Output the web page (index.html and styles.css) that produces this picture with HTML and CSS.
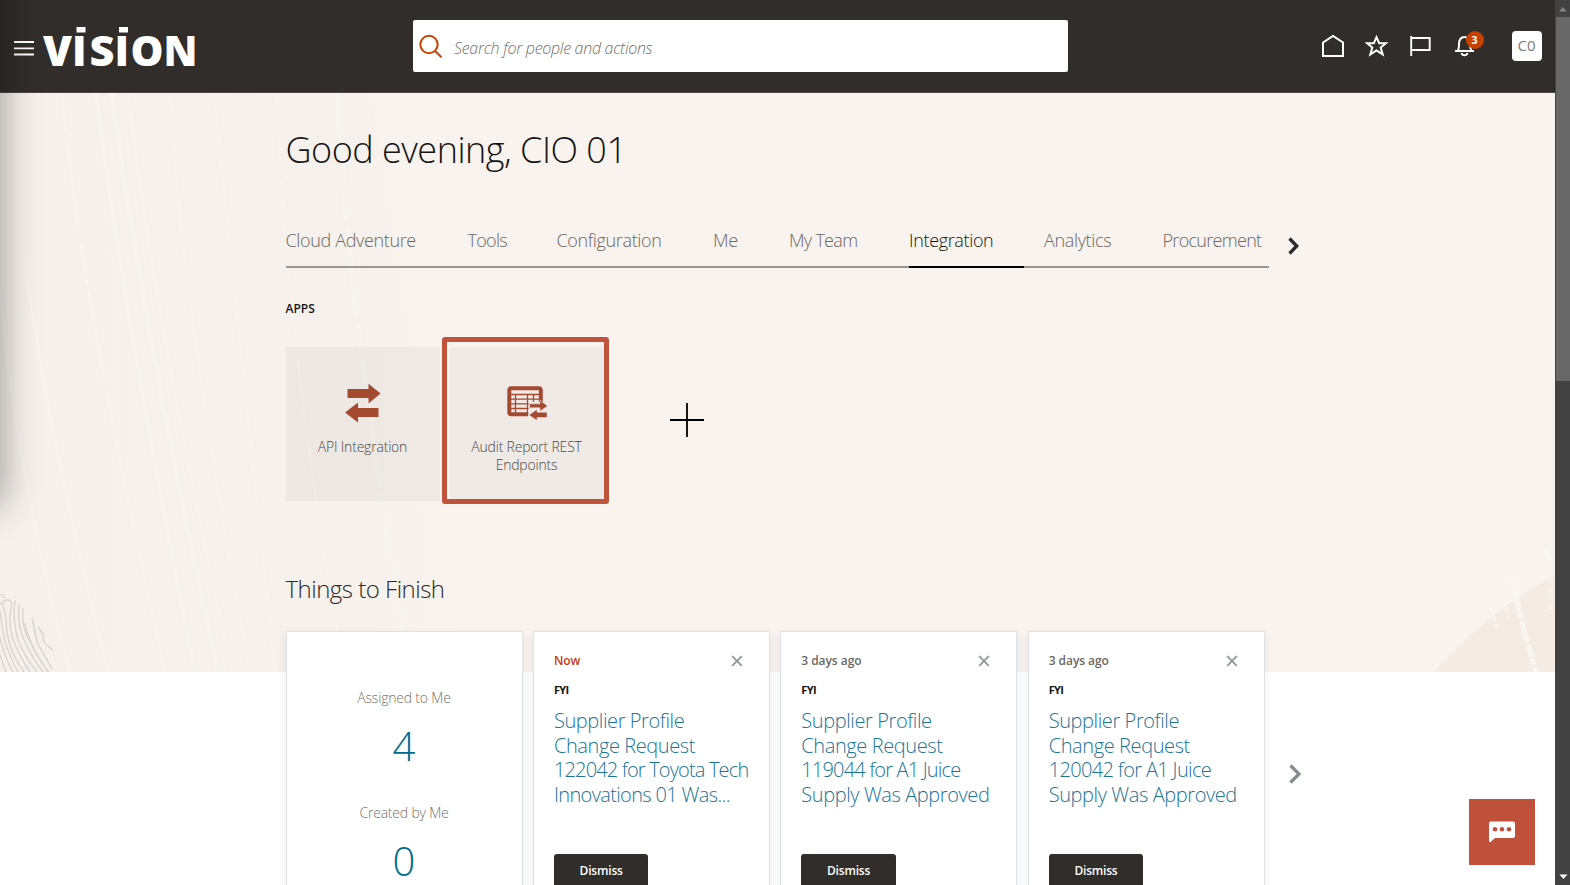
FILE: index.html
```html
<!DOCTYPE html>
<html lang="en">
<head>
<meta charset="utf-8">
<title>Vision</title>
<link rel="stylesheet" href="styles.css">
</head>
<body>
<div class="window">
  <div class="page">
    <header class="header">
      <svg class="menu-icon" width="20" height="16" viewBox="0 0 20 16"><path d="M0 2h20M0 8.3h20M0 14.5h20" stroke="#fff" stroke-width="1.8"/></svg>
      <svg class="logo" width="154" height="60" viewBox="0 -10 154 60">
        <g class="logo-text">
          <text x="0" y="40" textLength="29" lengthAdjust="spacingAndGlyphs">V</text>
          <text x="29" y="40">I</text>
          <text x="46.500" y="40" textLength="25" lengthAdjust="spacingAndGlyphs">S</text>
          <text x="71.500" y="40">I</text>
          <text x="87.500" y="40" textLength="33" lengthAdjust="spacingAndGlyphs">O</text>
          <text x="120.500" y="40" textLength="34" lengthAdjust="spacingAndGlyphs">N</text>
        </g>
        <path d="M33.500 1h9v5.500h-9zM76 1h9v5.500h-9zM32 10h4v4zM74.500 10h4v4z" fill="#fff"/>
      </svg>
      <div class="search">
        <svg width="26" height="26" viewBox="0 0 26 26" fill="none" stroke="#c74200" stroke-width="2"><circle cx="11" cy="10.500" r="8.700"/><path d="M17 17l6.500 6.300"/></svg>
        <span class="search-text">Search for people and actions</span>
      </div>
      <div class="actions">
        <svg width="24" height="24" viewBox="0 0 24 24" fill="none" stroke="#fff" stroke-width="2"><path d="M2 8.500L12 2l10 6.500V22H2z"/></svg>
        <svg width="24" height="24" viewBox="0 0 24 24" fill="none" stroke="#fff" stroke-width="2"><path d="M11.500 3.200l2.700 6h6.700l-5.200 4.300 2 6.900-6.200-4-6.200 4 2-6.900L2.100 9.200h6.700z"/></svg>
        <svg width="24" height="24" viewBox="0 0 24 24" fill="none" stroke="#fff" stroke-width="1.900"><path d="M2.200 2v20M2.200 4h18.500v12H2.200"/></svg>
        <div class="bell">
          <svg width="24" height="24" viewBox="0 0 24 24" fill="none" stroke="#fff" stroke-width="2"><path d="M2 17h19M5 16.500c1-2 1-3.500 1-6 0-4.500 2-7.500 5.500-7.500s5.500 3 5.500 7.500c0 2.500.2 4 1.500 6"/><path d="M8.500 19c.8 3 5.200 3 6 0"/></svg>
          <span class="badge">3</span>
        </div>
        <span class="avatar">C0</span>
      </div>
    </header>

    <main class="main">
      <svg class="texture" width="1555" height="579" viewBox="0 0 1555 579" fill="none">
        <defs>
          <linearGradient id="tint" x1="0" x2="1"><stop offset="0" stop-color="#f5f0ec"/><stop offset=".75" stop-color="#f6f1ed"/><stop offset="1" stop-color="#f8f3ef"/></linearGradient>
        </defs>
        <path d="M0 0H370Q410 250 475 579H0z" fill="url(#tint)"/>
        <g stroke="#f8f4f0" stroke-width="2.500" opacity=".75">
          <path d="M96 0Q125 230 195 579" stroke-width="4"/><path d="M112 0Q140 220 218 579" stroke-width="5"/><path d="M128 0Q155 230 232 579"/>
          <path d="M62 0Q80 200 165 579" stroke-dasharray="40 8 90 14"/><path d="M28 190Q50 350 108 579"/><path d="M215 10Q230 160 275 579" stroke-dasharray="150 30 80 9"/>
          <path d="M277 0Q285 250 345 579" stroke-dasharray="70 18"/><path d="M338 0Q345 200 410 579" stroke-width="6" stroke-dasharray="90 8 30 6"/>
          <path d="M170 0Q180 200 250 579" stroke-dasharray="20 30 90 12" stroke-width="2"/><path d="M0 200Q20 400 70 579" stroke-width="2"/>
        </g>
        <path d="M1434 579Q1492 515 1555 482V579z" fill="#f4ebe4"/>
        <g stroke="#f9f5f1">
          <path d="M1512 481Q1518 520 1536 579" stroke-width="5" stroke-dasharray="14 1 7 2"/><path d="M1510 482l4 22" stroke-width="7" stroke-dasharray="3 2"/>
          <path d="M1490 514l8 22M1506 514l3 10" stroke-width="3" stroke-dasharray="5 4"/><path d="M1550 430v90" stroke-width="5" stroke-dasharray="7 2 3 4" opacity=".6"/><path d="M1541 452l9 12" stroke-width="4"/>
        </g>
        <g stroke="#d9d4cf" stroke-width="1.400">
          <path d="M1 501l4 4M3 511q1-5 6-4q4 2 2 8c-2 12-1 24 3 34q7 17 16 30"/>
          <path d="M0 509q5 6 6 16c0 20 5 36 18 54M0 518q3 24 6 34 5 14 12 27M0 545q4 18 13 34M0 562l6 17"/>
          <path d="M15 507q-3 26 5 45 7 15 17 27M19 511q-2 22 6 38 8 17 18 30M23 515q-2 18 7 34 8 17 19 30M32 525l5 24 15 27M38 534l5 7M44 541q-4 8 9 16M25 530q2 14 13 33l10 16"/>
        </g>
      </svg>
      <div class="edge-shadow"></div>

      <div class="content">
        <h1 class="greeting">Good evening, CIO 01</h1>

        <div class="tabs-row">
          <nav class="tabs">
            <a class="tab">Cloud Adventure</a>
            <a class="tab tab-tight">Tools</a>
            <a class="tab">Configuration</a>
            <a class="tab">Me</a>
            <a class="tab tab-tight">My Team</a>
            <a class="tab tab-active">Integration</a>
            <a class="tab">Analytics</a>
            <a class="tab tab-tight">Procurement</a>
          </nav>
          <svg width="14" height="20" viewBox="0 0 14 20" fill="none" stroke="#2b2b2b" stroke-width="3.300"><path d="M2.500 2.500l7.200 7.500-7.200 7.500"/></svg>
        </div>

        <h2 class="apps-title">APPS</h2>
        <div class="tiles">
          <div class="tile">
            <svg width="44" height="40" viewBox="0 0 44 40" fill="#a34a31"><path d="M6.500 6h21V.700L39.500 10.500 27.500 20.500V15h-21zM37.500 25H17v-5.500L4 29.500 17 39.500V34h20.500z"/></svg>
            <span class="tile-label">API Integration</span>
          </div>
          <div class="tile tile-marked">
            <svg width="44" height="40" viewBox="0 0 44 40"><rect x="4.300" y="5.300" width="31.500" height="26" rx="2" fill="#f1ebe7" stroke="#a34a31" stroke-width="4"/><path d="M6 11.500h28M6 16.200h28M6 20.800h28M6 25.500h20M10.500 11v20M22.500 11v20M28.500 11v9" stroke="#a34a31" stroke-width="1.300"/><path d="M24 19h14v16H23z" fill="#efebe8"/><path d="M24.500 20.800h10.500v-3.600L42.500 23 35 28.300v-3.500H24.500zM42 29.200H32v-2.800L24 32l8 5.500v-3h10z" fill="#a34a31" stroke="#efebe8" stroke-width=".5"/></svg>
            <span class="tile-label">Audit Report REST Endpoints</span>
          </div>
          <svg class="add" width="36" height="36" viewBox="0 0 36 36"><path d="M18 1v34M1 18h34" stroke="#000" stroke-width="1.800"/></svg>
        </div>

        <h2 class="things-title">Things to Finish</h2>
        <div class="cards-row">
          <div class="cards">
            <section class="card counts">
              <span class="count-label">Assigned to Me</span>
              <span class="count">4</span>
              <span class="count-label count-label-second">Created by Me</span>
              <span class="count">0</span>
            </section>
            <section class="card">
              <div class="card-top"><span class="time time-now">Now</span><svg width="12" height="12" viewBox="0 0 12 12"><path d="M1.200 1.200l9.600 9.600M10.800 1.200l-9.600 9.600" stroke="#94979a" stroke-width="1.900"/></svg></div>
              <div class="kind">FYI</div>
              <div class="title"><span>Supplier Profile</span><span>Change Request</span><span class="title-tight">122042 for Toyota Tech</span><span class="title-dots">Innovations 01 Was...</span></div>
              <button class="dismiss">Dismiss</button>
            </section>
            <section class="card">
              <div class="card-top"><span class="time">3 days ago</span><svg width="12" height="12" viewBox="0 0 12 12"><path d="M1.200 1.200l9.600 9.600M10.800 1.200l-9.600 9.600" stroke="#94979a" stroke-width="1.900"/></svg></div>
              <div class="kind">FYI</div>
              <div class="title"><span>Supplier Profile</span><span>Change Request</span><span class="title-tight">119044 for A1 Juice</span><span>Supply Was Approved</span></div>
              <button class="dismiss">Dismiss</button>
            </section>
            <section class="card">
              <div class="card-top"><span class="time">3 days ago</span><svg width="12" height="12" viewBox="0 0 12 12"><path d="M1.200 1.200l9.600 9.600M10.800 1.200l-9.600 9.600" stroke="#94979a" stroke-width="1.900"/></svg></div>
              <div class="kind">FYI</div>
              <div class="title"><span>Supplier Profile</span><span>Change Request</span><span class="title-dots">120042 for A1 Juice</span><span>Supply Was Approved</span></div>
              <button class="dismiss">Dismiss</button>
            </section>
          </div>
          <svg class="cards-next" width="14" height="22" viewBox="0 0 14 22" fill="none" stroke="#868b8f" stroke-width="3.200"><path d="M2.500 2.500L11 11l-8.500 8.500"/></svg>
        </div>
      </div>

      <button class="chat"><svg width="28" height="24" viewBox="0 0 28 24"><path d="M3 1.500h22a2 2 0 0 1 2 2V16a2 2 0 0 1-2 2H7l-4.500 4Q1 22.500 1 21V3.500a2 2 0 0 1 2-2z" fill="#fff"/><g fill="#bf513b"><circle cx="7" cy="9.300" r="2.300"/><circle cx="14" cy="9.300" r="2.300"/><circle cx="21" cy="9.300" r="2.300"/></g></svg></button>
    </main>
  </div>

  <div class="scrollbar">
    <svg width="15" height="17" viewBox="0 0 15 17"><path d="M4 11.500L7.800 7l3.700 4.500z" fill="#868686"/></svg>
    <div class="thumb"></div>
    <svg class="scroll-down" width="15" height="17" viewBox="0 0 15 17"><path d="M4.500 6.500h8L8.500 11z" fill="#fff"/></svg>
  </div>
</div>
</body>
</html>
```
FILE: styles.css
```css
* { box-sizing: border-box; }

body {
  margin: 0;
  font-family: "Open Sans", "Noto Sans", sans-serif;
  font-weight: 300;
  background: #fff;
}

h1, h2 { margin: 0; }
svg { display: block; flex: none; }

.window {
  display: flex;
  width: 1570px;
  height: 885px;
  overflow: hidden;
}

.page {
  position: relative;
  width: 1555px;
  height: 885px;
  overflow: hidden;
}

/* Header */
.header {
  display: flex;
  align-items: center;
  height: 93px;
  padding-left: 13.5px;
  background: #312d2a;
  border-bottom: 1px solid #4d4845;
}

.menu-icon { margin-top: 4px; }

.logo {
  margin: 0 0 0 9.5px;
  overflow: visible;
}

.logo-text {
  font: 800 42px "Open Sans", sans-serif;
  fill: #fff;
}

.search {
  display: flex;
  align-items: center;
  width: 655px;
  height: 52px;
  margin-left: 215.5px;
  padding-left: 5.5px;
  background: #fff;
  border-radius: 2px;
}

.search > svg { margin-top: 1px; }

.search-text {
  margin: 3px 0 0 10px;
  color: #6f6f6f;
  font-size: 16px;
  font-style: italic;
  letter-spacing: -0.3px;
}

.actions {
  display: flex;
  align-items: center;
  gap: 20px;
  margin-left: 253px;
}

.bell { position: relative; }

.badge {
  position: absolute;
  top: -3.5px;
  left: 13px;
  width: 18px;
  height: 18px;
  border-radius: 9px;
  background: #c74200;
  color: #fff;
  font-size: 10.5px;
  font-weight: 700;
  line-height: 18px;
  text-align: center;
}

.avatar {
  width: 30px;
  height: 30px;
  margin-left: 15px;
  border-radius: 4px;
  background: #fff;
  color: #7c7c7c;
  font-size: 15px;
  font-weight: 400;
  line-height: 29px;
  text-align: center;
}

/* Main area */
.main {
  position: relative;
  height: 792px;
  background: linear-gradient(#f8f3ef 579px, #fff 579px);
}

.texture {
  position: absolute;
  top: 0;
  left: 0;
}

.edge-shadow {
  position: absolute;
  top: -150px;
  left: -30px;
  width: 30px;
  height: 560px;
  box-shadow: 0 0 36px 2px rgba(0, 0, 0, .38);
}

.content {
  position: relative;
  padding: 35px 0 0 285.5px;
}

.greeting {
  color: #161513;
  font-size: 36px;
  font-weight: 300;
  line-height: 44px;
  letter-spacing: -0.5px;
}

.tabs-row {
  display: flex;
  gap: 18px;
  margin-top: 56px;
}

.tabs {
  display: grid;
  grid-template-columns: 182px 89px 156.5px 76px 120px 135px 118.5px 106px;
  width: 983.5px;
  height: 40px;
  border-bottom: 2px solid #9a9693;
}

.tab {
  height: 40px;
  color: #6b6763;
  font-size: 18px;
  line-height: 24px;
  letter-spacing: -0.35px;
  white-space: nowrap;
}

.tab-tight { letter-spacing: -0.7px; }

.tab-active {
  width: 115px;
  color: #161513;
  border-bottom: 2px solid #000;
}

.tabs-row > svg { margin-top: 8px; }

.apps-title {
  margin-top: 33px;
  color: #161513;
  font-size: 12px;
  font-weight: 600;
  line-height: 16px;
}

.tiles {
  display: flex;
  gap: 10px;
  margin-top: 30px;
}

.tile {
  position: relative;
  display: flex;
  flex-direction: column;
  align-items: center;
  width: 154px;
  height: 153.5px;
  padding-top: 36px;
  background: rgba(49, 45, 50, .045);
}

.tile-label {
  width: 124px;
  margin-top: 15px;
  color: #4b4845;
  font-size: 14px;
  line-height: 17.5px;
  letter-spacing: -0.2px;
  text-align: center;
}

.tile-marked::after {
  content: "";
  position: absolute;
  inset: -10px -5px -3px -7.6px;
  border: 5px solid #c0533c;
  border-radius: 3px;
}

.add { margin: 55px 0 0 55.5px; }

.things-title {
  margin-top: 72px;
  color: #2b2926;
  font-size: 24px;
  font-weight: 300;
  line-height: 32px;
  letter-spacing: -0.5px;
}

/* Cards */
.cards-row {
  display: flex;
  gap: 23px;
  margin-top: 26.5px;
}

.cards {
  display: grid;
  grid-template-columns: repeat(4, 237px);
  gap: 10.4px;
}

.card {
  height: 300px;
  padding: 21px 20px 0;
  background: #fff;
  border: 1px solid #dde2e6;
  box-shadow: 0 4px 10px rgba(0, 0, 0, .07);
}

.counts {
  display: flex;
  flex-direction: column;
  align-items: center;
  padding-top: 56px;
}

.count-label {
  color: #75716d;
  font-size: 14px;
  line-height: 20px;
  letter-spacing: -0.2px;
}

.count-label-second { margin-top: 33px; }

.count {
  margin-top: 14px;
  color: #006b8f;
  font-size: 40px;
  line-height: 48px;
}

.card-top {
  display: flex;
  justify-content: space-between;
  align-items: center;
  padding-right: 6px;
}

.time {
  color: #6b6763;
  font-size: 12px;
  font-weight: 600;
  line-height: 16px;
  letter-spacing: -0.05px;
}

.time-now { color: #c43b12; }

.kind {
  margin-top: 14px;
  color: #161513;
  font-size: 11px;
  font-weight: 700;
  line-height: 14px;
  letter-spacing: -0.6px;
}

.title {
  margin-top: 11.8px;
  color: #1a7497;
  font-size: 20px;
  line-height: 24.7px;
  letter-spacing: -0.4px;
  white-space: nowrap;
}

.title span { display: block; }
.title .title-tight { letter-spacing: -0.83px; }
.title .title-dots { letter-spacing: -0.65px; }

.dismiss {
  display: block;
  width: 94.5px;
  height: 33px;
  margin-top: 46.4px;
  padding: 0;
  border: 0;
  border-radius: 3px;
  background: #312d2a;
  color: #fff;
  font: 600 12px/33px "Open Sans", sans-serif;
  letter-spacing: -0.2px;
}

.cards-next { margin-top: 132px; }

.chat {
  position: absolute;
  right: 20.5px;
  bottom: 20.5px;
  display: flex;
  align-items: center;
  justify-content: center;
  width: 65.5px;
  height: 65.5px;
  padding: 0;
  border: 0;
  background: #bf513b;
}

/* Scrollbar */
.scrollbar {
  display: flex;
  flex-direction: column;
  width: 15px;
  height: 885px;
  background: #424242;
}

.thumb {
  height: 364px;
  margin-left: 1px;
  background: #686868;
}

.scroll-down { margin-top: auto; }
```
